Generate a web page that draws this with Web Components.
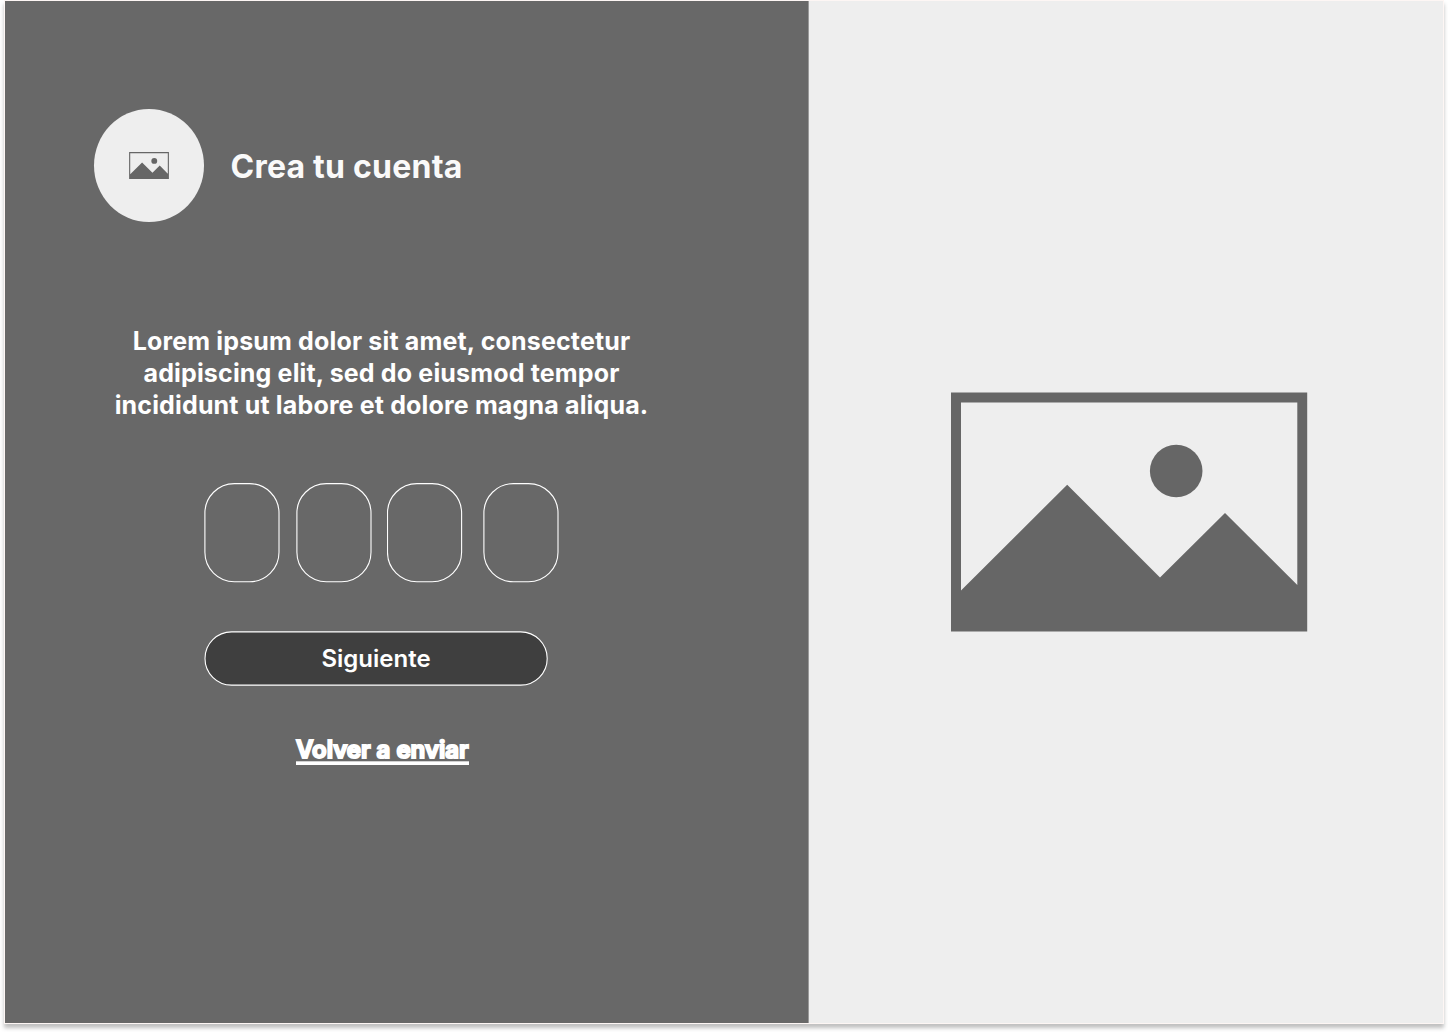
<!DOCTYPE html>
<html lang="es">
<head>
<meta charset="utf-8">
<title>Crea tu cuenta</title>
<style>
html, body { margin: 0; background: #fff; }
body { width: 1448px; height: 1032px; overflow: hidden; font-family: Inter, "Liberation Sans", sans-serif; color: #fff; }
</style>
</head>
<body>
<signup-page></signup-page>
<script>
function define(name, html) {
  const template = document.createElement('template');
  template.innerHTML = html;
  customElements.define(name, class extends HTMLElement {
    constructor() {
      super();
      this.attachShadow({ mode: 'open' }).append(template.content.cloneNode(true));
    }
  });
}

define('picture-placeholder', `
<style>
:host { display: block; width: 358px; height: 240px; }
svg { display: block; width: 100%; height: 100%; }
</style>
<svg viewBox="0 0 358 240" preserveAspectRatio="none" aria-hidden="true">
  <path fill="#666" fill-rule="evenodd" d="M1 .5H357.2V239.6H1ZM11 10.6V198.5L117.2 92.7L210 185.5L275 121L347.3 193V10.6Z"/>
  <circle cx="226.2" cy="79" r="26.3" fill="#666"/>
</svg>`);

define('brand-header', `
<style>
:host { display: flex; align-items: center; gap: 26.5px; height: 113px; }
.avatar { width: 110px; height: 113px; border-radius: 50%; background: #eee; display: flex; align-items: center; justify-content: center; }
picture-placeholder { width: 40px; height: 27px; }
h1 { margin: 2px 0 0; font-size: 32px; line-height: 39px; font-weight: 700; letter-spacing: .23px; color: #fafafa; white-space: nowrap; }
</style>
<div class="avatar"><picture-placeholder></picture-placeholder></div>
<h1><slot></slot></h1>`);

define('code-box', `
<style>
:host { display: block; width: 76px; height: 100px; }
svg { display: block; }
rect { x: var(--inset, .9px); }
</style>
<svg width="76" height="100" aria-hidden="true"><rect y=".6" width="74.1" height="98.2" rx="29.5" fill="none" stroke="#fff" stroke-width="1.1"/></svg>`);

define('code-input', `
<style>
:host { display: flex; height: 100px; }
code-box:nth-of-type(2) { margin-left: 16px; }
code-box:nth-of-type(3) { margin-left: 15px; --inset: .5px; }
code-box:nth-of-type(4) { margin-left: 20px; }
</style>
<code-box></code-box><code-box></code-box><code-box></code-box><code-box></code-box>`);

define('next-button', `
<style>
:host { display: grid; width: 344px; height: 55px; }
svg, button { grid-area: 1 / 1; }
button { border: 0; padding: 0; background: none; color: #fff; font: 600 24px/29px Inter, "Liberation Sans", sans-serif; }
</style>
<svg width="344" height="55" aria-hidden="true"><rect x="1" y=".9" width="342.2" height="53.2" rx="26.6" fill="#3f3f3f" stroke="#fff" stroke-width="1.1"/></svg>
<button type="button"><slot></slot></button>`);

define('resend-link', `
<style>
:host { display: block; }
a { display: inline-block; color: #fff; font-size: 24px; line-height: 29px; font-weight: 600; white-space: nowrap; -webkit-text-stroke: 2px #fff; height: 27px; }
a::after { content: ""; display: block; height: 4px; margin: -3px 0 0 -.5px; background: linear-gradient(#ffffffb0 0 1px, #fff 1px); }
</style>
<a><slot></slot></a>`);

define('signup-page', `
<style>
:host { display: flex; box-sizing: border-box; width: 1440px; height: 1024px; margin-left: 4px; border: 1px solid #fdf6f4; box-shadow: 0 4px 4px rgba(0,0,0,.25); }
.form { box-sizing: border-box; width: 804px; padding: 108px 0 0 89px; background: linear-gradient(90deg, #686868 803px, #9a9a9a 803px); }
.art { flex: 1; background: #eee; padding: 391px 0 0 141px; }
p { margin: 103px 0 0; width: 575px; text-align: center; font-size: 25px; line-height: 32px; font-weight: 700; letter-spacing: .16px; white-space: nowrap; }
code-input { margin: 62px 0 0 110px; }
next-button { margin: 48px 0 0 110px; }
resend-link { margin: 49px 0 0 202px; }
</style>
<div class="form">
  <brand-header>Crea tu cuenta</brand-header>
  <p>Lorem ipsum dolor sit amet, consectetur<br>adipiscing elit, sed do eiusmod tempor<br>incididunt ut labore et dolore magna aliqua.</p>
  <code-input></code-input>
  <next-button>Siguiente</next-button>
  <resend-link>Volver a enviar</resend-link>
</div>
<div class="art"><picture-placeholder></picture-placeholder></div>`);
</script>
</body>
</html>
